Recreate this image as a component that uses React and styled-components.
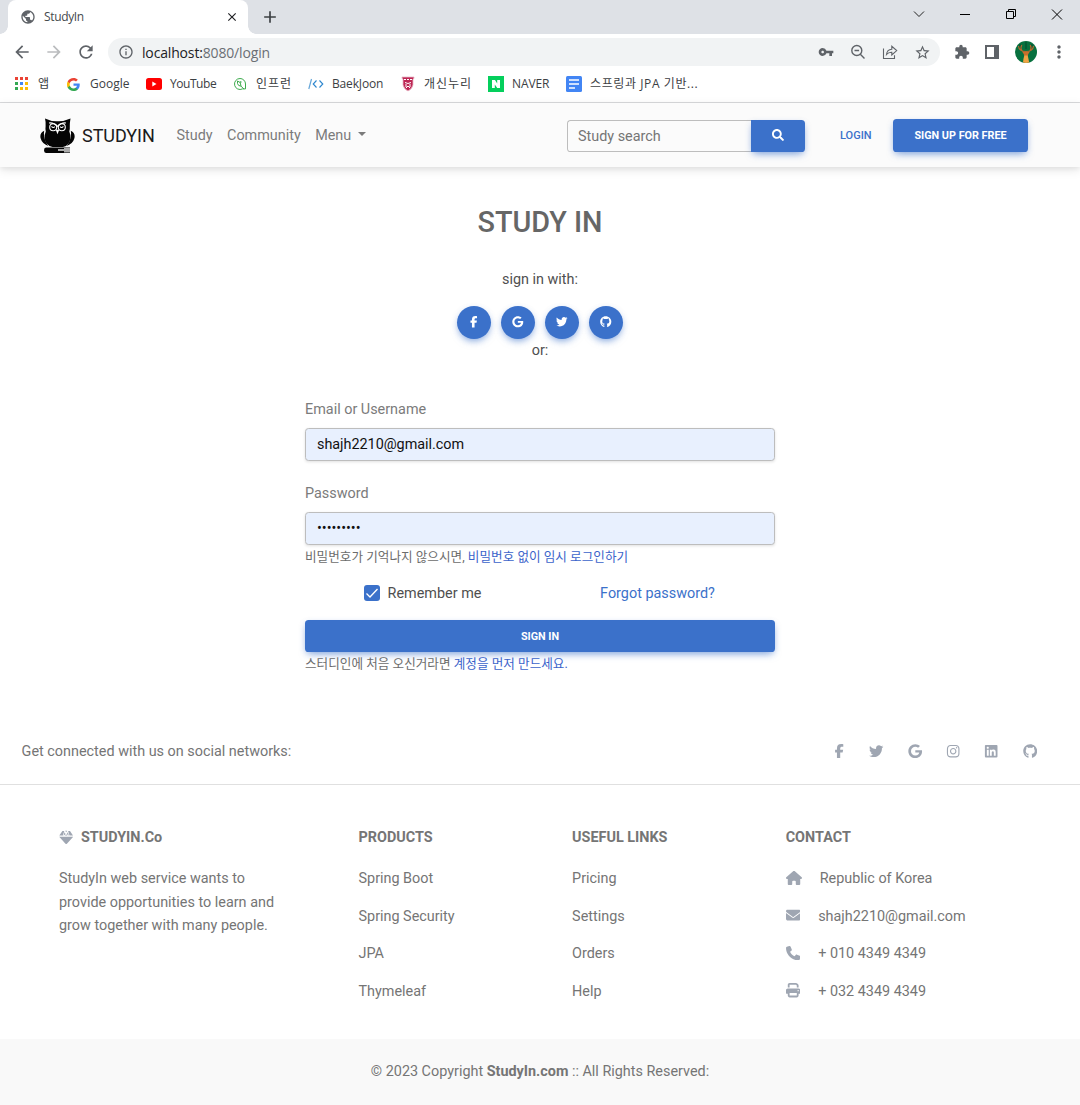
import React from "react";
import styled, { createGlobalStyle } from "styled-components";
import {
  FaFacebookF, FaGoogle, FaTwitter, FaGithub, FaInstagram, FaLinkedin,
  FaHouse, FaEnvelope, FaPhone, FaPrint,
} from "react-icons/fa6";
import { FaSearch } from "react-icons/fa";
import {
  MdPublic, MdArrowBack, MdArrowForward, MdRefresh, MdInfoOutline, MdVpnKey,
  MdStarBorder, MdExtension, MdMoreVert, MdClose, MdAdd,
} from "react-icons/md";

const blue = "#3b71ca";

const GlobalStyle = createGlobalStyle`
  *, *::before, *::after { box-sizing: border-box; }
  body {
    margin: 0;
    background: #fff;
    font-family: Roboto, "Noto Sans CJK KR", sans-serif;
    font-size: 14.4px;
    color: #4f4f4f;
    overflow: hidden;
  }
  svg { display: block; flex: none; }
  a { color: inherit; text-decoration: none; }
  button { font: inherit; border: 0; padding: 0; margin: 0; background: none; color: inherit; }
`;

/* ---------- browser frame ---------- */
const Window = styled.div`
  width: 1080px;
  height: 1105px;
  display: flex;
  flex-direction: column;
  overflow: hidden;
`;
const Chrome = styled.div`
  font-family: "Open Sans", "Noto Sans CJK KR", sans-serif;
  font-size: 12px;
  color: #3c4043;
  height: 103px;
  flex: none;
  border-bottom: 1px solid #d9dadc;
`;
const TabStrip = styled.div`
  height: 34px;
  background: #dee1e6;
  display: flex;
  align-items: stretch;
  padding-left: 8px;
`;
const Tab = styled.div`
  width: 240px;
  background: #fff;
  border-radius: 8px 8px 0 0;
  display: flex;
  align-items: center;
  padding: 0 9px 0 12px;
  color: #45494d;
  position: relative;
  &::before, &::after {
    content: "";
    position: absolute;
    bottom: 0;
    width: 8px;
    height: 8px;
  }
  &::before { left: -8px; background: radial-gradient(circle at 0 0, transparent 7.5px, #fff 8px); }
  &::after { right: -8px; background: radial-gradient(circle at 100% 0, transparent 7.5px, #fff 8px); }
`;
const TabTitle = styled.span`
  margin-left: 8px;
  flex: 1;
  letter-spacing: -0.35px;
  padding-bottom: 1px;
`;
const NewTab = styled.div`
  display: flex;
  align-items: center;
  margin-left: 12px;
  color: #3c4043;
`;
const WindowControls = styled.div`
  margin-left: auto;
  display: flex;
  height: 28px;
  align-items: center;
`;
const ControlCell = styled.div`
  width: 46px;
  display: flex;
  justify-content: center;
`;
const Toolbar = styled.div`
  height: 36px;
  display: flex;
  align-items: center;
  padding: 0 11px 0 12px;
  color: #5f6368;
`;
const NavIcons = styled.div`
  display: flex;
  gap: 12px;
  width: 96px;
`;
const Omnibox = styled.div`
  width: 832px;
  height: 28px;
  border-radius: 14px;
  background: #f1f3f4;
  display: flex;
  align-items: center;
  padding: 0 9px 0 10px;
  font-size: 14px;
`;
const Url = styled.div`
  margin-left: 8px;
  flex: 1;
  color: #6b6f74;
  letter-spacing: -0.16px;
  b { font-weight: 400; color: #202124; }
`;
const OmniIcons = styled.div`
  display: flex;
  align-items: center;
  gap: 16px;
`;
const Extensions = styled.div`
  flex: 1;
  display: flex;
  align-items: center;
  justify-content: space-between;
  padding-left: 14px;
`;
const AvatarSlot = styled.span`
  margin: 0 -3px 0 1px;
`;
const Bookmarks = styled.div`
  height: 28px;
  display: grid;
  grid-template-columns: 53px 78px 88px 75px 93px 87px 78px 140px;
  align-items: center;
  padding-left: 14px;
`;
const Bookmark = styled.div`
  display: flex;
  align-items: center;
  white-space: nowrap;
  letter-spacing: ${(p) => p.$ls || "-0.2px"};
`;
const BookmarkLabel = styled.span`
  padding-bottom: 2px;
`;
const Favicon = styled.span`
  width: ${(p) => p.$w || 24}px;
  flex: none;
`;

/* ---------- site header ---------- */
const Navbar = styled.header`
  height: 64px;
  flex: none;
  background: #fbfbfb;
  box-shadow: 0 3px 10px rgba(0, 0, 0, 0.1), 0 2px 4px rgba(0, 0, 0, 0.05);
  display: flex;
  align-items: center;
  padding: 0 52px 0 40px;
  z-index: 1;
`;
const Brand = styled.a`
  display: flex;
  align-items: center;
  gap: 7px;
  width: 136.5px;
  font-size: 18px;
  letter-spacing: -0.05px;
  color: #1a1a1a;
  svg { margin-top: 2px; }
`;
const NavLinks = styled.nav`
  display: flex;
  gap: 14.4px;
  color: #7b7b7b;
`;
const Dropdown = styled.a`
  display: flex;
  align-items: center;
  &::after {
    content: "";
    margin-left: 7px;
    margin-top: -2px;
    border: 4.7px solid transparent;
    border-top-color: currentColor;
    border-bottom: 0;
  }
`;
const Search = styled.form`
  display: flex;
  height: 32px;
  margin-left: auto;
  margin-top: 2px;
`;
const SearchInput = styled.input`
  width: 184px;
  border: 1px solid #bdbdbd;
  border-right: 0;
  border-radius: 3.6px 0 0 3.6px;
  background: transparent;
  padding: 1px 10px 0;
  font: 400 14.4px Roboto, sans-serif;
  letter-spacing: 0;
  outline: 0;
  &::placeholder { color: #757575; opacity: 1; }
`;
const raised = "0 4px 8px -3px rgba(59, 113, 202, 0.6), 0 2px 6px -1px rgba(59, 113, 202, 0.25)";
const SearchButton = styled.button`
  && {
    width: 54px;
    display: flex;
    align-items: center;
    justify-content: center;
    padding-bottom: 2px;
    background: ${blue};
    color: #fff;
    border-radius: 0 3.6px 3.6px 0;
    box-shadow: ${raised};
  }
`;
const LoginLink = styled.a`
  margin: 0 21px 0 35px;
  width: 32px;
  white-space: nowrap;
  color: ${blue};
  font-size: 11px;
  font-weight: 500;
`;
const Primary = styled.button`
  && {
    width: ${(p) => p.$width};
    height: ${(p) => p.$height}px;
    padding-top: ${(p) => p.$nudge || 0}px;
    background: ${blue};
    color: #fff;
    border-radius: 3.6px;
    box-shadow: ${raised};
    font-size: 10.8px;
    font-weight: 700;
    white-space: nowrap;
    display: flex;
    align-items: center;
    justify-content: center;
    flex: none;
  }
`;

/* ---------- sign-in form ---------- */
const Main = styled.main`
  width: 470px;
  height: 550px;
  flex: none;
  margin: 0 auto;
  padding-top: 37px;
`;
const Title = styled.h1`
  margin: 0;
  height: 36px;
  line-height: 36px;
  text-align: center;
  font-size: 28.8px;
  font-weight: 500;
  color: #666;
  letter-spacing: -0.05px;
`;
const Centered = styled.p`
  margin: ${(p) => p.$top || 0}px 0 0;
  line-height: 22px;
  text-align: center;
`;
const SocialButtons = styled.div`
  margin-top: 15px;
  display: flex;
  justify-content: center;
  gap: 10px;
`;
const RoundButton = styled.button`
  && {
    width: 34px;
    height: 33px;
    padding-bottom: 1px;
    border-radius: 50%;
    background: ${blue};
    color: #fff;
    display: flex;
    align-items: center;
    justify-content: center;
    box-shadow: ${raised};
  }
`;
const Field = styled.div`
  margin-top: ${(p) => p.$top}px;
`;
const Label = styled.label`
  display: block;
  height: 22px;
  line-height: 22px;
  margin-bottom: 7px;
  color: #7b7b7b;
`;
const TextInput = styled.input`
  display: block;
  width: 100%;
  height: 33px;
  border: 1px solid #bdbdbd;
  border-radius: 3.6px;
  background: #e8f0fe;
  box-shadow: 0 1px 3px rgba(0, 0, 0, 0.12);
  padding: 0 11px;
  font: 400 14.4px Roboto, sans-serif;
  letter-spacing: -0.02px;
  color: #111;
  outline: 0;
`;
const Hint = styled.small`
  display: block;
  height: 22px;
  line-height: ${(p) => p.$line || 24}px;
  font-size: 12.6px;
  color: #6c6c6c;
  letter-spacing: 0.02px;
  white-space: nowrap;
  a { color: #3b63ca; }
`;
const Options = styled.div`
  display: grid;
  grid-template-columns: 1fr 1fr;
  justify-items: center;
  align-items: center;
  height: 22px;
  margin: 15px 0 16px;
  a { color: ${blue}; }
`;
const Remember = styled.label`
  display: flex;
  align-items: center;
  gap: 8px;
`;
const CheckMark = styled.span`
  width: 16px;
  height: 16px;
  border-radius: 3px;
  background: ${blue};
`;

/* ---------- footer ---------- */
const Footer = styled.footer`
  color: #757575;
  flex: none;
`;
const SocialBar = styled.section`
  height: 68px;
  display: flex;
  justify-content: space-between;
  align-items: center;
  padding: 0 43px 0 21.6px;
  border-bottom: 1px solid #e0e0e0;
`;
const SocialLead = styled.span`
  padding-top: 2px;
`;
const SocialLinks = styled.div`
  display: grid;
  grid-template-columns: 37px 39px 38px 38px 38.5px 14.4px;
  color: #9fa6b2;
  padding-top: 1px;
`;
const Columns = styled.section`
  display: grid;
  grid-template-columns: 299.5px 213.6px 213.6px 1fr;
  padding: 43px 0 0 59px;
  height: 254px;
`;
const Heading = styled.h6`
  margin: 0 0 19.4px;
  height: 20px;
  line-height: 20px;
  font-size: 14.4px;
  font-weight: 700;
  display: flex;
  align-items: center;
  gap: 7.5px;
  svg { color: #9fa6b2; margin-bottom: 1px; }
`;
const About = styled.p`
  margin: 0;
  width: 225px;
  line-height: 23.5px;
`;
const Entry = styled.p`
  margin: 0 0 14px;
  line-height: 23.5px;
  display: flex;
  align-items: center;
  svg { color: #9fa6b2; margin-bottom: 2px; }
`;
const EntryIcon = styled.span`
  width: ${(p) => p.$w}px;
`;
const Copyright = styled.div`
  height: 68px;
  background: #f9f9f9;
  text-align: center;
  line-height: 65px;
`;

/* ---------- drawings ---------- */
const Owl = () => (
  <svg width="35" height="36" viewBox="0 0 35 36">
    <path fill="#050505" d="M5 .5Q11 3.500 17.500 3.200Q24 3.500 30.500 .5Q29.700 5 29.800 8Q30 12 29.300 13.500Q32 20 28.500 25.500Q26.500 28.500 23 29H12.500Q8.500 28 6.500 25.500Q3 20 5.800 13.500Q5.200 11 5.600 8Q5.900 4 5 .5Z" />
    <path fill="#050505" d="M4.200 12.800Q-.8 15 .7 20.500Q2 25.500 8.200 28Q2.800 20 4.200 12.800ZM30.800 12.800Q35.800 15 34.300 20.500Q33 25.500 26.800 28Q32.200 20 30.800 12.800Z" />
    <g fill="none" stroke="#fff" strokeWidth="1.100">
      <path d="M9 5Q13.500 4.300 17.500 8.300Q21.500 4.300 26 5" />
      <circle cx="13.200" cy="9.200" r="3.500" />
      <circle cx="21.800" cy="9.200" r="3.500" />
      <path d="M11.500 8.400q1.700 2 3.400 .3M20 8.700q1.700 1.700 3.400-.3" />
    </g>
    <path fill="#fff" d="M15.700 11.800h3.600l-1.800 4.500z" />
    <path fill="#050505" d="M6 29.500H30V31H18V34H30V35H6Q4 34.700 4 32.200Q4 29.700 6 29.500Z" />
    <path fill="#050505" d="M17 30h8v4.500h-8z" />
    <path fill="#aaa" d="M18 31h6v-1h6v4h-6v-1h-6z" />
    <path fill="#555" d="M24 34h6v1h-6z" />
  </svg>
);
const GemIcon = () => (
  <svg width="14.4" height="14.4" viewBox="0 0 14.4 14.4" fill="currentColor">
    <path d="M3.400 1h1.900L3.900 5.600H.3zM11 1H9.100l1.400 4.600h3.600zM6.200 .8h2l-1 1.500zM5.500 2.300l1.100 1.600-1.700 1.700h-.3zM8.900 2.300L7.800 3.900l1.700 1.700h.3zM7.200 4.300l1.300 1.300H5.900zM.2 6.700h14L7.900 13.700q-.7.600-1.400 0z" />
  </svg>
);
const AppsIcon = () => {
  const colors = ["#ea4335", "#ea4335", "#ea4335", "#34a853", "#4285f4", "#fbbc05", "#34a853", "#fbbc05", "#fbbc05"];
  return (
    <svg width="14" height="14" viewBox="0 0 14 14">
      {colors.map((c, i) => (
        <rect key={i} x={1 + (i % 3) * 5} y={Math.floor(i / 3) * 5} width="3" height="3" fill={c} />
      ))}
    </svg>
  );
};
const GoogleIcon = () => (
  <svg width="13" height="13" viewBox="0 0 48 48">
    <path fill="#4285f4" d="M47 24.500c0-1.600-.1-3.100-.4-4.500H24v9h13c-.6 3-2.300 5.500-4.800 7.200v6h7.700C44.400 38 47 31.800 47 24.500z" />
    <path fill="#34a853" d="M24 48c6.500 0 11.900-2.100 15.900-5.800l-7.700-6c-2.100 1.400-4.900 2.300-8.200 2.300-6.300 0-11.600-4.200-13.500-9.900h-8v6.200C6.500 42.600 14.600 48 24 48z" />
    <path fill="#fbbc05" d="M10.500 28.600a14.400 14.400 0 0 1 0-9.200v-6.200h-8a24 24 0 0 0 0 21.600z" />
    <path fill="#ea4335" d="M24 9.500c3.500 0 6.700 1.200 9.200 3.600l6.800-6.800C35.900 2.400 30.500 0 24 0 14.600 0 6.500 5.400 2.500 13.200l8 6.200C12.400 13.700 17.700 9.500 24 9.500z" />
  </svg>
);
const YouTubeIcon = () => (
  <svg width="17" height="12" viewBox="0 0 17 12">
    <rect x="1" width="16" height="12" rx="2.500" fill="#f00" />
    <path d="M7.300 3.500v5L11.500 6z" fill="#fff" />
  </svg>
);
const InflearnIcon = () => (
  <svg width="14" height="14" viewBox="0 0 14 14" fill="none" stroke="#3dab4d">
    <path d="M7 1.500a5.500 5.500 0 1 0 2.500 10.400h3V7A5.500 5.500 0 0 0 7 1.500z" />
    <path d="M4.500 4v2.500Q5 9 8 9.200L11 12M4.500 4Q8 4.500 8 9M7.800 4v2" />
  </svg>
);
const BaekjoonIcon = () => (
  <svg width="16" height="12" viewBox="0 0 16 12" fill="none">
    <path d="M3.500 1L.8 11" stroke="#64a5d8" strokeWidth="1.200" />
    <path d="M8.500 2.500L5.200 6l3.300 3.500M11.500 2.500L14.800 6l-3.300 3.500" stroke="#2c86ce" strokeWidth="1.100" />
  </svg>
);
const ShieldIcon = () => (
  <svg width="14" height="16" viewBox="0 0 14 16">
    <path d="M1 1h12v1.500l-1 .5v6q-1 4-5 6-4-2-5-6V3l-1-.5z" fill="#bd2654" stroke="#e9b8c6" strokeWidth=".8" />
    <path d="M3 3.500h2M6 3.500h2M9 3.500h2M4 6.500q3 2 6 0M5 8v3M9 8v3M5 12l2-2 2 2" stroke="#fff" fill="none" />
  </svg>
);
const NaverIcon = () => (
  <svg width="16" height="16" viewBox="0 0 16 16">
    <rect width="16" height="16" fill="#04cf5c" />
    <path d="M4 4h3l2.200 3.600V4H12v8H9.200L6.800 8.500V12H4z" fill="#fff" />
  </svg>
);
const DocIcon = () => (
  <svg width="16" height="16" viewBox="0 0 16 16">
    <rect width="16" height="16" rx="1.500" fill="#4285f4" />
    <path d="M3 4h10M3 8h10M3 12h6" stroke="#fff" strokeWidth="1.700" />
  </svg>
);
const ZoomOutIcon = () => (
  <svg width="16" height="16" viewBox="0 0 16 16" fill="none" stroke="#5f6368" strokeWidth="1.400">
    <circle cx="6.800" cy="6.500" r="5" />
    <path d="M4.500 6.500h4.600M10.300 10.200l4.200 4.200" />
  </svg>
);
const ShareIcon = () => (
  <svg width="16" height="16" viewBox="0 0 16 16" fill="none" stroke="#5f6368" strokeWidth="1.100">
    <path d="M1.500 4.500v10h11v-3.200" />
    <path d="M4.500 10.500Q5 5.500 9.800 5.200V2.300L14.700 6.600 9.800 11V8.200Q6.500 8 4.500 10.500z" />
  </svg>
);
const PanelIcon = () => (
  <svg width="14" height="14" viewBox="0 0 14 14">
    <path fill="#5f6368" fillRule="evenodd" d="M0 0h14v14H0zM2 2v10h7V2z" />
  </svg>
);
const Avatar = () => (
  <svg width="22" height="22" viewBox="0 0 22 22">
    <circle cx="11" cy="11" r="11" fill="#08713f" />
    <path d="M5 3v5M17 3v5M11 1v7" stroke="#075c35" strokeWidth="2" />
    <path d="M11 10.500Q4 10.500 3.500 5M7 9.800Q5 7 6.800 4M11 10.500Q18 10.500 18.500 5M15 9.800Q17 7 15.200 4" fill="none" stroke="#b5662e" strokeWidth="1.200" />
    <path d="M7 10.500l2.500.3h3l2.500-.3-1.700 2.500-.7 2.500h-3.200L8.700 13z" fill="#c86f2b" />
    <path d="M8 21.600Q8.500 17 9.300 14.500h3.400Q13.300 17 14.200 21.600Q11 22.200 8 21.600z" fill="#efa444" />
  </svg>
);
const CheckIcon = () => (
  <svg width="16" height="16" viewBox="0 0 16 16">
    <path d="M2.500 8.500L6 12l7.500-8" fill="none" stroke="#fff" strokeWidth="1.300" />
  </svg>
);

const bookmarks = [
  { icon: AppsIcon, label: "앱" },
  { icon: GoogleIcon, label: "Google", w: 23, ls: "0" },
  { icon: YouTubeIcon, label: "YouTube", w: 25, ls: "-0.45px" },
  { icon: InflearnIcon, label: "인프런", w: 23, ls: "1px" },
  { icon: BaekjoonIcon, label: "BaekJoon", ls: "-0.15px" },
  { icon: ShieldIcon, label: "개신누리", w: 23, ls: "0.95px" },
  { icon: NaverIcon, label: "NAVER", ls: "-0.1px" },
  { icon: DocIcon, label: "스프링과 JPA 기반...", ls: "0.6px" },
];
const signInWith = [FaFacebookF, FaGoogle, FaTwitter, FaGithub];
const networks = [FaFacebookF, FaTwitter, FaGoogle, FaInstagram, FaLinkedin, FaGithub];
const products = ["Spring Boot", "Spring Security", "JPA", "Thymeleaf"];
const usefulLinks = ["Pricing", "Settings", "Orders", "Help"];
const contacts = [
  { icon: FaHouse, text: "Republic of Korea", w: 34, size: 16 },
  { icon: FaEnvelope, text: "shajh2210@gmail.com", w: 32.500, size: 14.4 },
  { icon: FaPhone, text: "+ 010 4349 4349", w: 32.500, size: 14.4 },
  { icon: FaPrint, text: "+ 032 4349 4349", w: 32.500, size: 14.4 },
];

const BrowserChrome = () => (
  <Chrome>
    <TabStrip>
      <Tab>
        <MdPublic size={16} color="#5f6368" />
        <TabTitle>StudyIn</TabTitle>
        <MdClose size={14} color="#202124" />
      </Tab>
      <NewTab><MdAdd size={20} /></NewTab>
      <WindowControls>
        <ControlCell>
          <svg width="12" height="8" viewBox="0 0 12 8"><path d="M1 1.500l5 5 5-5" fill="none" stroke="#222" /></svg>
        </ControlCell>
        <ControlCell>
          <svg width="10" height="1" viewBox="0 0 10 1"><rect width="10" height="1" fill="#000" /></svg>
        </ControlCell>
        <ControlCell>
          <svg width="10" height="10" viewBox="0 0 10 10" fill="none" stroke="#000"><path d="M.5 2.500h7v7h-7zM2.500 2.500v-2h7v7h-2" /></svg>
        </ControlCell>
        <ControlCell>
          <svg width="12" height="11" viewBox="0 0 12 11"><path d="M1 .5l10 10M11 .5l-10 10" stroke="#000" /></svg>
        </ControlCell>
      </WindowControls>
    </TabStrip>
    <Toolbar>
      <NavIcons>
        <MdArrowBack size={20} />
        <MdArrowForward size={20} color="#babcbe" />
        <MdRefresh size={20} />
      </NavIcons>
      <Omnibox>
        <MdInfoOutline size={16} />
        <Url><b>localhost:</b>8080/login</Url>
        <OmniIcons>
          <MdVpnKey size={16} />
          <ZoomOutIcon />
          <ShareIcon />
          <MdStarBorder size={17} />
        </OmniIcons>
      </Omnibox>
      <Extensions>
        <MdExtension size={16} />
        <PanelIcon />
        <AvatarSlot><Avatar /></AvatarSlot>
        <MdMoreVert size={20} />
      </Extensions>
    </Toolbar>
    <Bookmarks>
      {bookmarks.map(({ icon: Icon, label, w, ls }) => (
        <Bookmark key={label} $ls={ls}>
          <Favicon $w={w}><Icon /></Favicon>
          <BookmarkLabel>{label}</BookmarkLabel>
        </Bookmark>
      ))}
    </Bookmarks>
  </Chrome>
);

export default function App() {
  return (
    <Window>
      <GlobalStyle />
      <BrowserChrome />
      <Navbar>
        <Brand href="#"><Owl />STUDYIN</Brand>
        <NavLinks>
          <a href="#">Study</a>
          <a href="#">Community</a>
          <Dropdown href="#">Menu</Dropdown>
        </NavLinks>
        <Search>
          <SearchInput placeholder="Study search" />
          <SearchButton type="button"><FaSearch size={12} /></SearchButton>
        </Search>
        <LoginLink href="#">LOGIN</LoginLink>
        <Primary $width="135px" $height={33}>SIGN UP FOR FREE</Primary>
      </Navbar>
      <Main>
        <Title>STUDY IN</Title>
        <Centered $top={29}>sign in with:</Centered>
        <SocialButtons>
          {signInWith.map((Icon, i) => <RoundButton key={i}><Icon size={11.500} /></RoundButton>)}
        </SocialButtons>
        <Centered $top={1}>or:</Centered>
        <Field $top={37}>
          <Label>Email or Username</Label>
          <TextInput defaultValue="shajh2210@gmail.com" />
        </Field>
        <Field $top={22}>
          <Label>Password</Label>
          <TextInput type="password" defaultValue="studyin22" />
        </Field>
        <Hint $line={23}>비밀번호가 기억나지 않으시면, <a href="#">비밀번호 없이 임시 로그인하기</a></Hint>
        <Options>
          <Remember><CheckMark><CheckIcon /></CheckMark><span>Remember me</span></Remember>
          <a href="#">Forgot password?</a>
        </Options>
        <Primary $width="100%" $height={32} $nudge={1}>SIGN IN</Primary>
        <Hint>스터디인에 처음 오신거라면 <a href="#">계정을 먼저 만드세요.</a></Hint>
      </Main>
      <Footer>
        <SocialBar>
          <SocialLead>Get connected with us on social networks:</SocialLead>
          <SocialLinks>
            {networks.map((Icon, i) => <Icon key={i} size={14.4} />)}
          </SocialLinks>
        </SocialBar>
        <Columns>
          <div>
            <Heading><GemIcon />STUDYIN.Co</Heading>
            <About>StudyIn web service wants to provide opportunities to learn and grow together with many people.</About>
          </div>
          <div>
            <Heading>PRODUCTS</Heading>
            {products.map((t) => <Entry key={t}>{t}</Entry>)}
          </div>
          <div>
            <Heading>USEFUL LINKS</Heading>
            {usefulLinks.map((t) => <Entry key={t}>{t}</Entry>)}
          </div>
          <div>
            <Heading>CONTACT</Heading>
            {contacts.map(({ icon: Icon, text, w, size }) => (
              <Entry key={text}><EntryIcon $w={w}><Icon size={size} /></EntryIcon>{text}</Entry>
            ))}
          </div>
        </Columns>
        <Copyright>© 2023 Copyright <b>StudyIn.com</b> :: All Rights Reserved:</Copyright>
      </Footer>
    </Window>
  );
}
